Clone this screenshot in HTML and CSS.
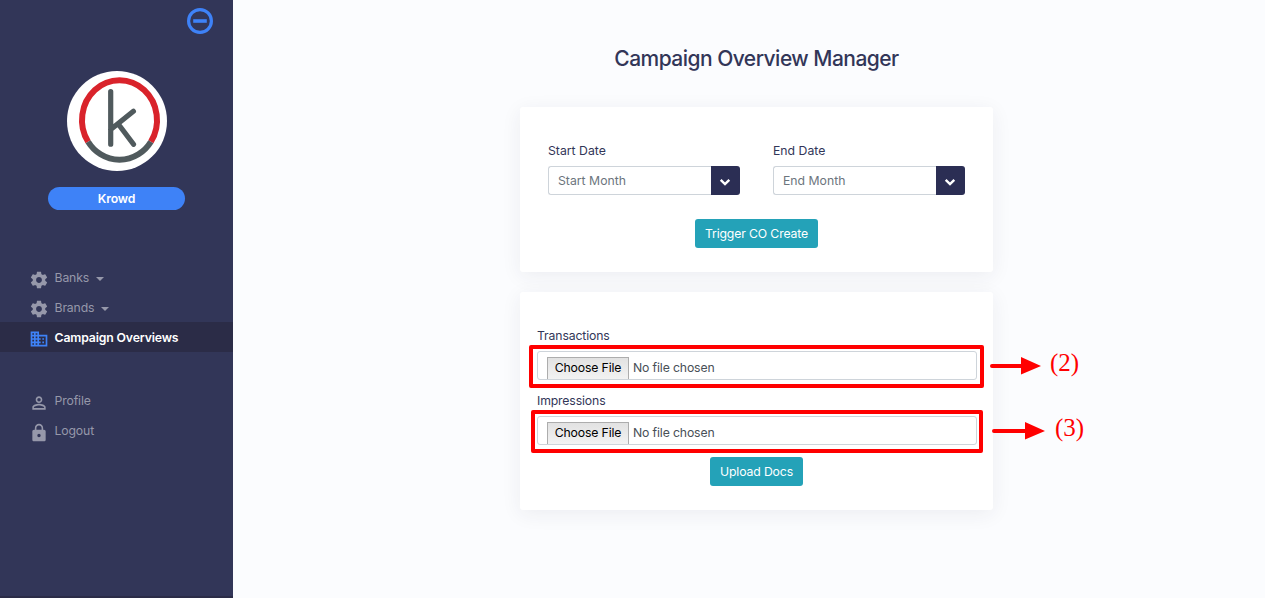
FILE: index.html
```html
<!DOCTYPE html>
<html lang="en">
<head>
<meta charset="utf-8">
<title>Campaign Overview Manager</title>
<link rel="stylesheet" href="styles.css">
</head>
<body>
<div class="app">
  <aside class="sidebar">
    <div class="toggle-row">
      <svg class="toggle" viewBox="0 0 26 26"><circle cx="13" cy="13" r="11.4" fill="none" stroke="#3e82f7" stroke-width="3.2"/><path d="M6.2 11.2h13.6v3.6H6.2z" fill="#3e82f7"/></svg>
    </div>
    <svg class="logo" viewBox="0 0 100 100">
      <circle cx="50" cy="50" r="50" fill="#fff"/>
      <g fill="none" stroke-width="6">
        <path d="M21.1 70.7A37.5 39.7 0 1 1 83.9 70.7" stroke="#d9232b"/>
        <path d="M21.1 70.7A37.5 39.7 0 0 0 83.9 70.7" stroke="#505a5d"/>
      </g>
      <path d="M43.7 20.6V73.2M43.7 58.500 66.400 40.300M52 54 66.500 73.300" fill="none" stroke="#505a5d" stroke-width="5.2" stroke-linecap="round"/>
    </svg>
    <div class="badge">Krowd</div>
    <nav class="menu">
      <a class="item"><svg class="icon" viewBox="0 0 24 24"><path d="M19.43 12.98c.04-.32.07-.64.07-.98s-.03-.66-.07-.98l2.11-1.65c.19-.15.24-.42.12-.64l-2-3.46c-.12-.22-.39-.3-.61-.22l-2.49 1c-.52-.4-1.08-.73-1.69-.98l-.38-2.65C14.46 2.18 14.25 2 14 2h-4c-.25 0-.46.18-.49.42l-.38 2.65c-.61.25-1.17.59-1.69.98l-2.49-1c-.23-.09-.49 0-.61.22l-2 3.46c-.13.22-.07.49.12.64l2.11 1.65c-.04.32-.07.65-.07.98s.03.66.07.98l-2.11 1.65c-.19.15-.24.42-.12.64l2 3.46c.12.22.39.3.61.22l2.49-1c.52.4 1.08.73 1.69.98l.38 2.65c.03.24.24.42.49.42h4c.25 0 .46-.18.49-.42l.38-2.65c.61-.25 1.17-.59 1.69-.98l2.49 1c.23.09.49 0 .61-.22l2-3.46c.12-.22.07-.49-.12-.64l-2.11-1.65zM12 15.5c-1.93 0-3.5-1.57-3.5-3.5s1.57-3.5 3.5-3.5 3.5 1.57 3.5 3.5-1.57 3.5-3.5 3.5z"/></svg><span>Banks</span><i class="caret"></i></a>
      <a class="item raised"><svg class="icon" viewBox="0 0 24 24"><path d="M19.43 12.98c.04-.32.07-.64.07-.98s-.03-.66-.07-.98l2.11-1.65c.19-.15.24-.42.12-.64l-2-3.46c-.12-.22-.39-.3-.61-.22l-2.49 1c-.52-.4-1.08-.73-1.69-.98l-.38-2.65C14.46 2.18 14.25 2 14 2h-4c-.25 0-.46.18-.49.42l-.38 2.65c-.61.25-1.17.59-1.69.98l-2.49-1c-.23-.09-.49 0-.61.22l-2 3.46c-.13.22-.07.49.12.64l2.11 1.65c-.04.32-.07.65-.07.98s.03.66.07.98l-2.11 1.65c-.19.15-.24.42-.12.64l2 3.46c.12.22.39.3.61.22l2.49-1c.52.4 1.08.73 1.69.98l.38 2.65c.03.24.24.42.49.42h4c.25 0 .46-.18.49-.42l.38-2.65c.61-.25 1.17-.59 1.69-.98l2.49 1c.23.09.49 0 .61-.22l2-3.46c.12-.22.07-.49-.12-.64l-2.11-1.65zM12 15.5c-1.93 0-3.5-1.57-3.5-3.5s1.57-3.5 3.5-3.5 3.5 1.57 3.5 3.5-1.57 3.5-3.5 3.5z"/></svg><span>Brands</span><i class="caret"></i></a>
      <a class="item raised active"><svg class="icon" viewBox="0 0 24 24"><path d="M12 7V3H2v18h20V7H12zM6 19H4v-2h2v2zm0-4H4v-2h2v2zm0-4H4V9h2v2zm0-4H4V5h2v2zm4 12H8v-2h2v2zm0-4H8v-2h2v2zm0-4H8V9h2v2zm0-4H8V5h2v2zm10 12h-8v-2h2v-2h-2v-2h2v-2h-2V9h8v10zm-2-8h-2v2h2v-2zm0 4h-2v2h2v-2z"/></svg><span>Campaign Overviews</span></a>
    </nav>
    <nav class="menu account">
      <a class="item"><svg class="icon" viewBox="0 0 24 24"><path d="M12 5.9a2.1 2.1 0 1 1 0 4.2 2.1 2.1 0 0 1 0-4.2m0 9c2.97 0 6.1 1.46 6.1 2.1v1.1H5.9V17c0-.64 3.13-2.1 6.1-2.1M12 4C9.79 4 8 5.79 8 8s1.79 4 4 4 4-1.79 4-4-1.79-4-4-4zm0 9c-2.67 0-8 1.34-8 4v3h16v-3c0-2.66-5.33-4-8-4z"/></svg><span class="profile">Profile</span></a>
      <a class="item"><svg class="icon" viewBox="0 0 24 24"><path d="M18 8h-1V6c0-2.76-2.24-5-5-5S7 3.24 7 6v2H6c-1.1 0-2 .9-2 2v10c0 1.1.9 2 2 2h12c1.1 0 2-.9 2-2V10c0-1.1-.9-2-2-2zm-6 9c-1.1 0-2-.9-2-2s.9-2 2-2 2 .9 2 2-.9 2-2 2zm3.1-9H8.9V6c0-1.71 1.39-3.1 3.1-3.1 1.71 0 3.1 1.39 3.1 3.1v2z"/></svg><span>Logout</span></a>
    </nav>
  </aside>
  <main class="content">
    <h1 class="title">Campaign Overview Manager</h1>
    <section class="card dates">
      <div class="date-row">
        <div class="field"><label class="label">Start Date</label>
          <div class="picker"><div class="value">Start Month</div><div class="drop"><svg class="chevron" viewBox="0 0 12 8"><path d="M1.7 1.8 6 6l4.3-4.2" fill="none" stroke="#fff" stroke-width="2.4"/></svg></div></div></div>
        <div class="field"><label class="label">End Date</label>
          <div class="picker"><div class="value">End Month</div><div class="drop"><svg class="chevron" viewBox="0 0 12 8"><path d="M1.7 1.8 6 6l4.3-4.2" fill="none" stroke="#fff" stroke-width="2.4"/></svg></div></div></div>
      </div>
      <button class="btn trigger">Trigger CO Create</button>
    </section>
    <section class="card uploads">
      <label class="label">Transactions</label>
      <div class="file"><span class="choose">Choose File</span><span class="filename">No file chosen</span></div>
      <label class="label">Impressions</label>
      <div class="file"><span class="choose">Choose File</span><span class="filename">No file chosen</span></div>
      <button class="btn upload">Upload Docs</button>
    </section>
  </main>
</div>
<svg class="notes" viewBox="0 0 1265 598">
  <g fill="none" stroke="#f00" stroke-width="4" stroke-linejoin="round" stroke-linecap="round">
    <rect x="531" y="347" width="451" height="39"/>
    <rect x="533" y="412" width="448" height="39"/>
    <path d="M992 366h30M994 431h32"/>
  </g>
  <path d="M1021 357l20 9-20 8.5zM1025 422l20 9-20 8.5z" fill="#f00"/>
  <text class="note" x="1050" y="371">(2)</text>
  <text class="note" x="1055" y="436">(3)</text>
</svg>
</body>
</html>
```
FILE: styles.css
```css
* { box-sizing: border-box; }
body { margin: 0; overflow: hidden; font: 12.25px/18px Inter, "Liberation Sans", sans-serif; color: #323658; letter-spacing: -.14px; }
.app { display: flex; height: 598px; background: #fbfcfe; }
.sidebar { width: 233px; background: #323658; border-bottom: 2px solid #2b2c47; display: flex; flex-direction: column; align-items: center; }
.toggle-row { width: 100%; height: 71px; padding: 8px 20px 0 0; text-align: right; }
.toggle { width: 26px; height: 26px; }
.logo { width: 100px; height: 100px; margin-left: 1px; flex: none; }
.badge { width: 137px; height: 23px; margin-top: 16px; border-radius: 12px; background: #3e82f7; color: #fff; font-weight: 600; line-height: 23px; text-align: center; }
.menu { width: 100%; margin-top: 52px; }
.account { margin-top: 33px; }
.item { display: flex; align-items: center; height: 30px; padding: 2px 0 0 28.5px; color: #9698aa; }
.item span { margin: 0 0 0 6px; }
.icon { width: 20px; height: 20px; fill: currentColor; flex: none; margin-top: 3px; }
.raised .icon { margin-top: 1px; }
.item span { margin-top: -1px; }
.caret { margin: 1px 0 0 7px; border: 4px solid transparent; border-top-color: currentColor; border-bottom: 0; }
.active { background: #2b2c47; color: #fff; font-weight: 600; }
.active .icon { fill: #3e82f7; }
.content { flex: 1; padding: 43px 0 0 287px; }
.title { width: 473px; margin: 0 0 33px; font-size: 21px; line-height: 31px; font-weight: 500; letter-spacing: -.53px; text-align: center; white-space: nowrap; }
.card { width: 473px; background: #fff; border-radius: 3px; box-shadow: 0 4px 20px rgba(40, 45, 70, .07); display: flex; flex-direction: column; }
.dates { height: 165px; padding: 34px 28px 0; }
.date-row { display: flex; gap: 33px; }
.field { width: 192px; }
.label { display: block; flex: none; height: 25px; line-height: 20px; }
.dates .label { letter-spacing: 0; }
.picker { display: flex; height: 29px; }
.value { flex: 1; border: 1px solid #ced4da; border-right: 0; border-radius: 3px 0 0 3px; padding-left: 9px; line-height: 27px; color: #6c757d; letter-spacing: 0; }
.drop { width: 29.5px; background: #2b2e54; border-radius: 0 3px 3px 0; display: flex; align-items: center; justify-content: center; padding: 2px 1.5px 0 0; }
.chevron { width: 12px; height: 8px; }
.btn { height: 29px; padding: 0; border: 0; border-radius: 3px; background: #24a2b8; color: #fff; font: inherit; letter-spacing: -.14px; align-self: center; white-space: nowrap; flex: none; }
.trigger { width: 123px; margin-top: 24px; }
.uploads { height: 218px; margin-top: 20px; padding: 34px 16px 0 17px; }
.file { flex: none; height: 29px; margin-bottom: 11px; border: 1px solid #ced4da; border-radius: 3px; display: flex; padding: 5px 0 0 9px; overflow: hidden; }
.choose { width: 82px; height: 24px; border: 1px solid #adadad; border-bottom: 0; background: linear-gradient(#e2e2e2, #f4f4f4); color: #000; text-align: center; line-height: 20px; }
.filename { margin-left: 4px; line-height: 22px; color: #495057; }
.upload { width: 93px; margin: 1px 1px 0 0; }
.notes { position: absolute; left: 0; top: 0; width: 1265px; height: 598px; pointer-events: none; }
.note { font: 25px "Liberation Serif", serif; fill: #f00; letter-spacing: 0; }
```
